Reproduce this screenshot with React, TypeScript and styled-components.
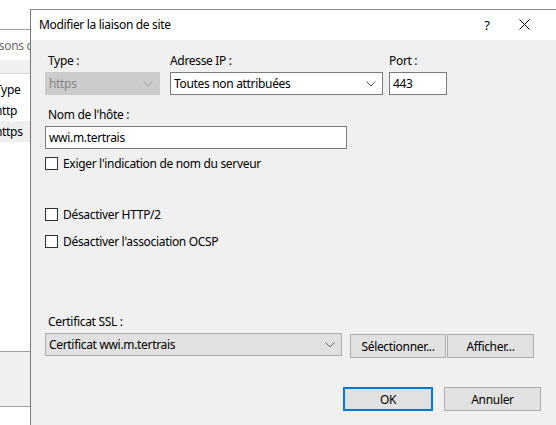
import React from "react";
import styled, { createGlobalStyle } from "styled-components";

const Global = createGlobalStyle`
  html, body { margin: 0; padding: 0; background: #ffffff; }
  body {
    font-family: "Segoe UI", "Noto Sans", "Open Sans", sans-serif;
    font-size: 12px;
    letter-spacing: -0.32px;
    color: #000;
  }
  * { box-sizing: border-box; }
`;

const Page = styled.div`
  width: 556px;
  height: 425px;
  display: flex;
  overflow: hidden;
  background: #ffffff;
`;

/* ---------- background window (left strip) ---------- */
const BackPane = styled.div`
  width: 30px;
  flex: none;
  display: flex;
  flex-direction: column;
  overflow: hidden;
  background: #ffffff;
`;

const BackTop = styled.div`
  height: 30px;
  flex: none;
  border-bottom: 1px solid #a0a0a0;
`;

const BackHint = styled.div`
  height: 30px;
  flex: none;
  display: flex;
  align-items: center;
  white-space: nowrap;
  color: #6d6d6d;
  text-indent: -4px;
`;

const BackHeaderBand = styled.div`
  height: 14px;
  flex: none;
  background: #f0f0f0;
  border-bottom: 1px solid #d9d9d9;
`;

const BackList = styled.div`
  height: 277px;
  flex: none;
  display: flex;
  flex-direction: column;
  padding-top: 5px;
`;

const BackRow = styled.div<{ $selected?: boolean }>`
  height: 21px;
  display: flex;
  align-items: center;
  white-space: nowrap;
  text-indent: -5px;
  background: ${(p) => (p.$selected ? "#efefef" : "transparent")};
`;

const BackFooter = styled.div`
  height: 56px;
  flex: none;
  background: #f0f0f0;
  border-top: 1px solid #a0a0a0;
  border-bottom: 1px solid #a0a0a0;
`;

/* ---------- dialog ---------- */
const Dialog = styled.div`
  flex: 1;
  margin-top: 9px;
  display: flex;
  flex-direction: column;
  border-left: 1px solid #767676;
  border-top: 1px solid #8a8a8a;
  background: #f0f0f0;
`;

const TitleBar = styled.div`
  height: 30px;
  flex: none;
  background: #ffffff;
  display: flex;
  align-items: center;
  padding: 0 9px 0 8px;
`;

const Title = styled.div`
  flex: 1;
  color: #000;
  padding-bottom: 2px;
`;

const TitleButton = styled.div<{ $w: number }>`
  width: ${(p) => p.$w}px;
  height: 30px;
  display: flex;
  align-items: center;
  justify-content: center;
  color: #000;
  font-size: 13px;
  padding-bottom: 1px;
`;

const Body = styled.div`
  flex: 1;
  display: flex;
  flex-direction: column;
  padding: 13px 0 0 14px;
`;

const FieldRow = styled.div`
  display: flex;
  align-items: flex-start;
`;

const Field = styled.div<{ $w: number; $gap?: number; $mt?: number }>`
  width: ${(p) => p.$w}px;
  margin-right: ${(p) => p.$gap ?? 0}px;
  margin-top: ${(p) => p.$mt ?? 0}px;
  display: flex;
  flex-direction: column;
`;

const Label = styled.div<{ $indent?: number }>`
  height: 16px;
  line-height: 16px;
  padding-left: ${(p) => p.$indent ?? 0}px;
  margin-bottom: 3px;
  white-space: nowrap;
`;

const Combo = styled.div<{ $variant: "disabled" | "white" | "gray" }>`
  height: 23px;
  display: flex;
  align-items: center;
  padding: 0 6px 0 3px;
  white-space: nowrap;
  border: 1px solid
    ${(p) => (p.$variant === "disabled" ? "#cccccc" : p.$variant === "gray" ? "#adadad" : "#7a7a7a")};
  background: ${(p) => (p.$variant === "disabled" ? "#cccccc" : p.$variant === "gray" ? "#e1e1e1" : "#ffffff")};
  color: ${(p) => (p.$variant === "disabled" ? "#838383" : "#000000")};
`;

const ComboText = styled.span`
  flex: 1;
  overflow: hidden;
`;

const TextBox = styled.div<{ $w: number }>`
  width: ${(p) => p.$w}px;
  height: 23px;
  display: flex;
  align-items: center;
  padding-left: 3px;
  border: 1px solid #7a7a7a;
  background: #ffffff;
  white-space: nowrap;
`;

const CheckRow = styled.label<{ $mt: number }>`
  display: flex;
  align-items: center;
  margin-top: ${(p) => p.$mt}px;
  height: 15px;
  white-space: nowrap;
`;

const Box = styled.span`
  width: 13px;
  height: 13px;
  border: 1px solid #333333;
  background: #ffffff;
  margin-right: 5px;
  flex: none;
`;

const CertRow = styled.div`
  display: flex;
  align-items: flex-end;
  margin-top: 65px;
`;

const Button = styled.div<{ $w: number; $primary?: boolean }>`
  width: ${(p) => p.$w}px;
  height: 24px;
  display: flex;
  align-items: center;
  justify-content: center;
  background: #e1e1e1;
  border: ${(p) => (p.$primary ? "2px solid #0078d7" : "1px solid #adadad")};
  white-space: nowrap;
`;

const ButtonGroup = styled.div`
  display: flex;
  gap: 1px;
  margin-left: 8px;
  margin-bottom: -2px;
`;

const Footer = styled.div`
  display: flex;
  margin-top: 31px;
  padding-left: 298px;
  gap: 11px;
`;

const Chevron = ({ color }: { color: string }) => (
  <svg width="10" height="6" viewBox="0 0 10 6" style={{ flex: "none" }}>
    <polyline points="0.5,0.5 5,5 9.5,0.5" fill="none" stroke={color} strokeWidth="1" />
  </svg>
);

const CloseIcon = () => (
  <svg width="11" height="11" viewBox="0 0 11 11">
    <line x1="0.5" y1="0.5" x2="10.5" y2="10.5" stroke="#000" strokeWidth="1" />
    <line x1="10.5" y1="0.5" x2="0.5" y2="10.5" stroke="#000" strokeWidth="1" />
  </svg>
);

export default function App() {
  return (
    <>
      <Global />
      <Page>
        <BackPane>
          <BackTop />
          <BackHint>isons c</BackHint>
          <BackHeaderBand />
          <BackList>
            <BackRow>Type</BackRow>
            <BackRow>http</BackRow>
            <BackRow $selected>https</BackRow>
          </BackList>
          <BackFooter />
        </BackPane>

        <Dialog>
          <TitleBar>
            <Title>Modifier la liaison de site</Title>
            <TitleButton $w={28}>?</TitleButton>
            <TitleButton $w={46}>
              <CloseIcon />
            </TitleButton>
          </TitleBar>
          <Body>
            <FieldRow>
              <Field $w={115} $gap={10}>
                <Label $indent={3}>Type :</Label>
                <Combo $variant="disabled">
                  <ComboText>https</ComboText>
                  <Chevron color="#a6a6a6" />
                </Combo>
              </Field>
              <Field $w={213} $gap={6}>
                <Label>Adresse IP :</Label>
                <Combo $variant="white">
                  <ComboText>Toutes non attribuées</ComboText>
                  <Chevron color="#606060" />
                </Combo>
              </Field>
              <Field $w={58}>
                <Label>Port :</Label>
                <TextBox $w={58}>443</TextBox>
              </Field>
            </FieldRow>

            <Field $w={302} $mt={12}>
              <Label $indent={3}>Nom de l'hôte :</Label>
              <TextBox $w={302}>wwi.m.tertrais</TextBox>
            </Field>

            <CheckRow $mt={7}>
              <Box />
              Exiger l'indication de nom du serveur
            </CheckRow>
            <CheckRow $mt={36}>
              <Box />
              Désactiver HTTP/2
            </CheckRow>
            <CheckRow $mt={12}>
              <Box />
              Désactiver l'association OCSP
            </CheckRow>

            <CertRow>
              <Field $w={297}>
                <Label $indent={3}>Certificat SSL :</Label>
                <Combo $variant="gray">
                  <ComboText>Certificat wwi.m.tertrais</ComboText>
                  <Chevron color="#606060" />
                </Combo>
              </Field>
              <ButtonGroup>
                <Button $w={96}>Sélectionner...</Button>
                <Button $w={87}>Afficher...</Button>
              </ButtonGroup>
            </CertRow>

            <Footer>
              <Button $w={90} $primary>
                OK
              </Button>
              <Button $w={97}>Annuler</Button>
            </Footer>
          </Body>
        </Dialog>
      </Page>
    </>
  );
}
